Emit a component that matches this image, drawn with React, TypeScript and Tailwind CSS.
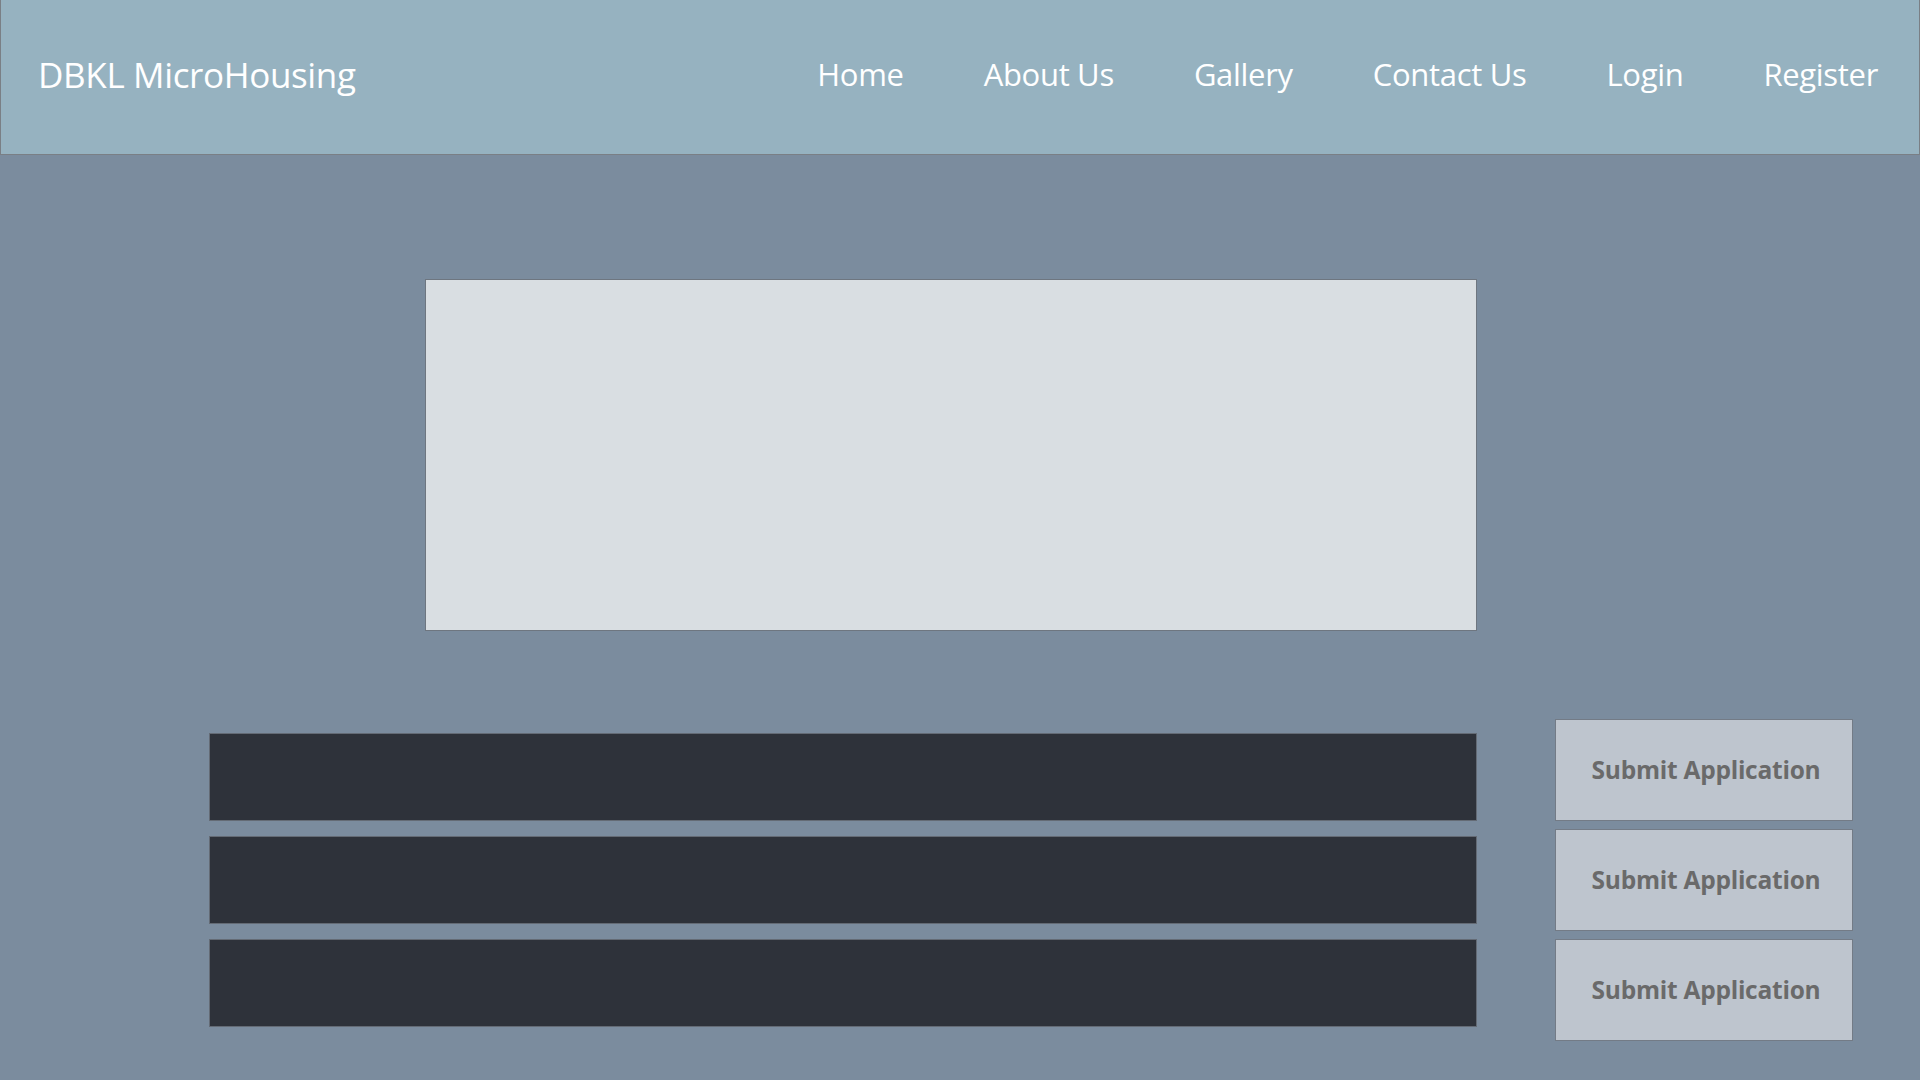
import React from "react";

const navItems = ["Home", "About Us", "Gallery", "Contact Us", "Login", "Register"];

export default function App() {
  return (
    <div
      className="min-h-screen w-full bg-[#7b8c9e]"
      style={{ fontFamily: '"Open Sans", "Noto Sans", sans-serif' }}
    >
      <header className="flex h-[155px] items-center justify-between border border-t-0 border-[#7a7f85] bg-[#96b2c0] pb-[6px]">
        <div className="pl-[37px] text-[35px] leading-none tracking-[-0.01em] text-white">
          DBKL MicroHousing
        </div>
        <nav className="flex items-center pr-[1px]">
          {navItems.map((item) => (
            <a
              key={item}
              className="px-[40px] text-[31px] leading-none tracking-[-0.01em] text-white"
            >
              {item}
            </a>
          ))}
        </nav>
      </header>

      <main className="pt-[124px]">
        <div className="ml-[425px] h-[352px] w-[1052px] border border-[#6e7680] bg-[#d9dee2]" />

        <div className="mt-[88px] flex items-center gap-[78px] pl-[209px]">
          <div className="flex w-[1268px] flex-col gap-[15px]">
            {[0, 1, 2].map((i) => (
              <div
                key={i}
                className="h-[88px] border border-[#646b75] bg-[#2e323a]"
              />
            ))}
          </div>
          <div className="flex w-[298px] flex-col gap-[8px]">
            {[0, 1, 2].map((i) => (
              <button
                key={i}
                className="flex h-[102px] items-center justify-center border border-[#737b86] bg-[#bec5ce] pl-[4px] text-[24.5px] font-bold tracking-[-0.01em] text-[#6a6a6a]"
              >
                Submit Application
              </button>
            ))}
          </div>
        </div>
      </main>
    </div>
  );
}
